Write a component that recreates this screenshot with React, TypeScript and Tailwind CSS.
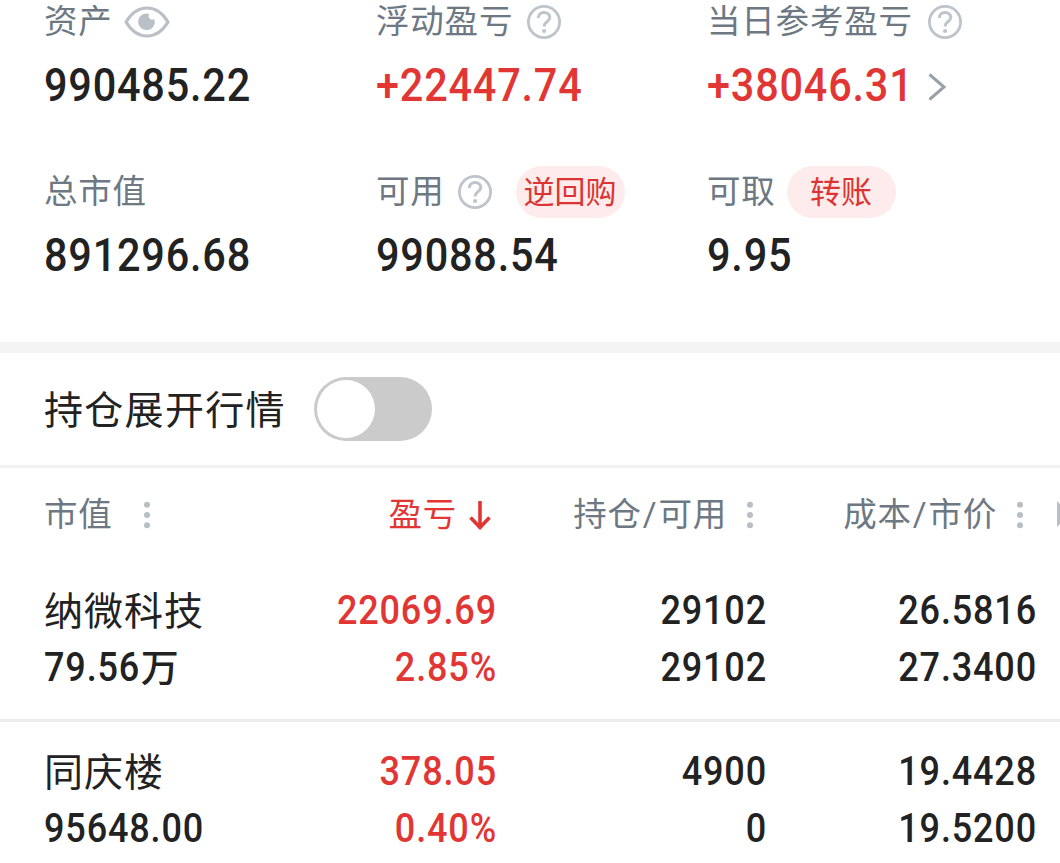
import React from "react";
import clsx from "clsx";

type Holding = {
  name: string;
  value: string;
  unit?: string;
  profit: string;
  percent: string;
  position: string;
  available: string;
  cost: string;
  price: string;
};

const holdings: Holding[] = [
  {
    name: "纳微科技",
    value: "79.56",
    unit: "万",
    profit: "22069.69",
    percent: "2.85%",
    position: "29102",
    available: "29102",
    cost: "26.5816",
    price: "27.3400",
  },
  {
    name: "同庆楼",
    value: "95648.00",
    profit: "378.05",
    percent: "0.40%",
    position: "4900",
    available: "0",
    cost: "19.4428",
    price: "19.5200",
  },
];

function EyeIcon() {
  return (
    <svg className="ml-[11px] h-[32px] w-[46px]" viewBox="0 0 46 32" fill="none">
      <path
        d="M2 16C7.5 6.800 14.500 2 23 2s15.500 4.800 21 14c-5.500 9.200-12.500 14-21 14S7.500 25.200 2 16z"
        stroke="#b9c0c6"
        strokeWidth="3.200"
        strokeLinejoin="round"
      />
      <path
        d="M25.300 8a3.600 3.600 0 0 0 5 5A8.300 8.300 0 1 1 25.300 8z"
        fill="#b9c0c6"
      />
    </svg>
  );
}

function HelpIcon({ className }: { className?: string }) {
  return (
    <svg className={clsx("h-[34px] w-[34px]", className)} viewBox="0 0 34 34" fill="none">
      <circle cx="17" cy="17" r="15.600" stroke="#bec4cb" strokeWidth="2.800" />
      <path
        d="M11.300 13c0-3.200 2.300-5.500 5.700-5.500s5.800 2.200 5.800 5.100c0 3.900-5.600 4.300-5.600 8.200v.8"
        stroke="#bec4cb"
        strokeWidth="3"
      />
      <circle cx="17.100" cy="26" r="2.100" fill="#bec4cb" />
    </svg>
  );
}

function Dots({ className }: { className?: string }) {
  return (
    <svg className={clsx("h-[28px] w-[6px]", className)} viewBox="0 0 6 28" fill="#b7bec4">
      <circle cx="3" cy="3.800" r="3" />
      <circle cx="3" cy="14" r="3" />
      <circle cx="3" cy="24.200" r="3" />
    </svg>
  );
}

function Label({ children }: { children: React.ReactNode }) {
  return <span className="text-[33.500px] tracking-[0.800px] text-[#6d7883]">{children}</span>;
}

function Slash() {
  return <span className="mx-px">/</span>;
}

function Amount({ children, red }: { children: React.ReactNode; red?: boolean }) {
  return (
    <span
      className={clsx(
        "mb-0.5 inline-block origin-left scale-x-90 text-[46px] font-medium tracking-[0.900px]",
        red ? "text-[#e23635]" : "text-[#222222]"
      )}
    >
      {children}
    </span>
  );
}

function Pill({ children, className }: { children: React.ReactNode; className?: string }) {
  return (
    <button
      className={clsx(
        "flex h-[52px] w-[109px] items-center justify-center rounded-full bg-[#fdeceb] text-[31px] text-[#dc3434]",
        className
      )}
    >
      {children}
    </button>
  );
}

function Summary() {
  return (
    <section className="h-[342px] pl-11">
      <div className="grid grid-cols-[332px_331px_1fr]">
        <div className="flex h-[43px] items-center">
          <Label>资产</Label>
          <EyeIcon />
        </div>
        <div className="flex h-[43px] items-center">
          <Label>浮动盈亏</Label>
          <HelpIcon className="ml-[14px]" />
        </div>
        <div className="flex h-[43px] items-center">
          <Label>当日参考盈亏</Label>
          <HelpIcon className="ml-[15px]" />
        </div>
        <div className="flex h-[85px] items-center">
          <Amount>990485.22</Amount>
        </div>
        <div className="flex h-[85px] items-center">
          <Amount red>+22447.74</Amount>
        </div>
        <div className="flex h-[85px] items-center">
          <Amount red>+38046.31</Amount>
          <svg className="-ml-2 mt-0.5 h-[28px] w-[18px]" viewBox="0 0 18 28" fill="none">
            <path d="M1.500 1.500L16 14 1.500 26.500" stroke="#98a1a9" strokeWidth="3" />
          </svg>
        </div>
      </div>
      <div className="mt-[38px] grid grid-cols-[332px_331px_1fr]">
        <div className="flex h-[52px] items-center">
          <Label>总市值</Label>
        </div>
        <div className="flex h-[52px] items-center">
          <Label>可用</Label>
          <HelpIcon className="ml-[13px]" />
          <Pill className="ml-6">逆回购</Pill>
        </div>
        <div className="flex h-[52px] items-center">
          <Label>可取</Label>
          <Pill className="ml-[11px]">转账</Pill>
        </div>
        <div className="flex h-[75px] items-center">
          <Amount>891296.68</Amount>
        </div>
        <div className="flex h-[75px] items-center">
          <Amount>99088.54</Amount>
        </div>
        <div className="flex h-[75px] items-center">
          <Amount>9.95</Amount>
        </div>
      </div>
    </section>
  );
}

function TableHeader() {
  return (
    <div className="relative grid h-[93px] grid-cols-[222px_230px_270px_270px] items-center pl-11">
      <div className="flex items-center">
        <Label>市值</Label>
        <Dots className="ml-[31px]" />
      </div>
      <div className="flex items-center justify-end pr-1">
        <span className="text-[33.500px] tracking-[0.800px] text-[#e23635]">盈亏</span>
        <svg className="ml-[11px] h-[30px] w-[24px]" viewBox="0 0 24 30" fill="none">
          <path d="M12 1v27M2.500 17.500L12 27.500l9.500-10" stroke="#e23635" strokeWidth="3.600" />
        </svg>
      </div>
      <div className="flex items-center justify-end pr-[13px]">
        <Label>
          持仓
          <Slash />
          可用
        </Label>
        <Dots className="ml-5" />
      </div>
      <div className="flex items-center justify-end pr-[13px]">
        <Label>
          成本
          <Slash />
          市价
        </Label>
        <Dots className="ml-5" />
      </div>
      <svg className="absolute right-0 top-[33px] h-[26px] w-[3px]" viewBox="0 0 3 26" fill="#b7bec4">
        <path d="M0 0l3 3v20l-3 3z" />
      </svg>
    </div>
  );
}

function Figure({ children, className }: { children: React.ReactNode; className?: string }) {
  return (
    <span className={clsx("inline-block scale-x-90", className ?? "origin-right")}>{children}</span>
  );
}

function HoldingRow({ item }: { item: Holding }) {
  return (
    <div className="grid auto-rows-[57px] grid-cols-[223px_230px_270px_270px] items-center pl-11 text-right text-[40px] font-medium tracking-[0.950px] text-[#222222]">
      <span className="pt-[3px] text-left text-[39px] font-normal tracking-[1px]">{item.name}</span>
      <Figure className="origin-right text-[#e23635]">{item.profit}</Figure>
      <Figure>{item.position}</Figure>
      <Figure>{item.cost}</Figure>
      <span className="text-left">
        <Figure className="origin-left">{item.value}</Figure>
        {item.unit && <span className="-ml-[10px] text-[38px]">{item.unit}</span>}
      </span>
      <Figure className="origin-right text-[#e23635]">{item.percent}</Figure>
      <Figure>{item.available}</Figure>
      <Figure>{item.price}</Figure>
    </div>
  );
}

export default function App() {
  return (
    <main className="h-[863px] w-[1060px] overflow-hidden whitespace-nowrap bg-white font-[Roboto,'Noto_Sans_CJK_SC',sans-serif] leading-none">
      <Summary />
      <div className="h-[11px] bg-[#f4f4f4]" />
      <div className="flex h-[115px] items-center border-b-3 border-[#f2f2f2] pl-11">
        <span className="pt-[5px] text-[39px] tracking-[1.300px] text-[#222222]">持仓展开行情</span>
        <button className="ml-7 h-[64px] w-[118px] rounded-full bg-[#cbcbcb] p-[3px]">
          <span className="block size-[58px] rounded-full bg-white" />
        </button>
      </div>
      <TableHeader />
      <div className="border-b-3 border-[#ebecec] pb-[23px] pt-[21px]">
        <HoldingRow item={holdings[0]} />
      </div>
      <div className="pt-[21px]">
        <HoldingRow item={holdings[1]} />
      </div>
    </main>
  );
}
